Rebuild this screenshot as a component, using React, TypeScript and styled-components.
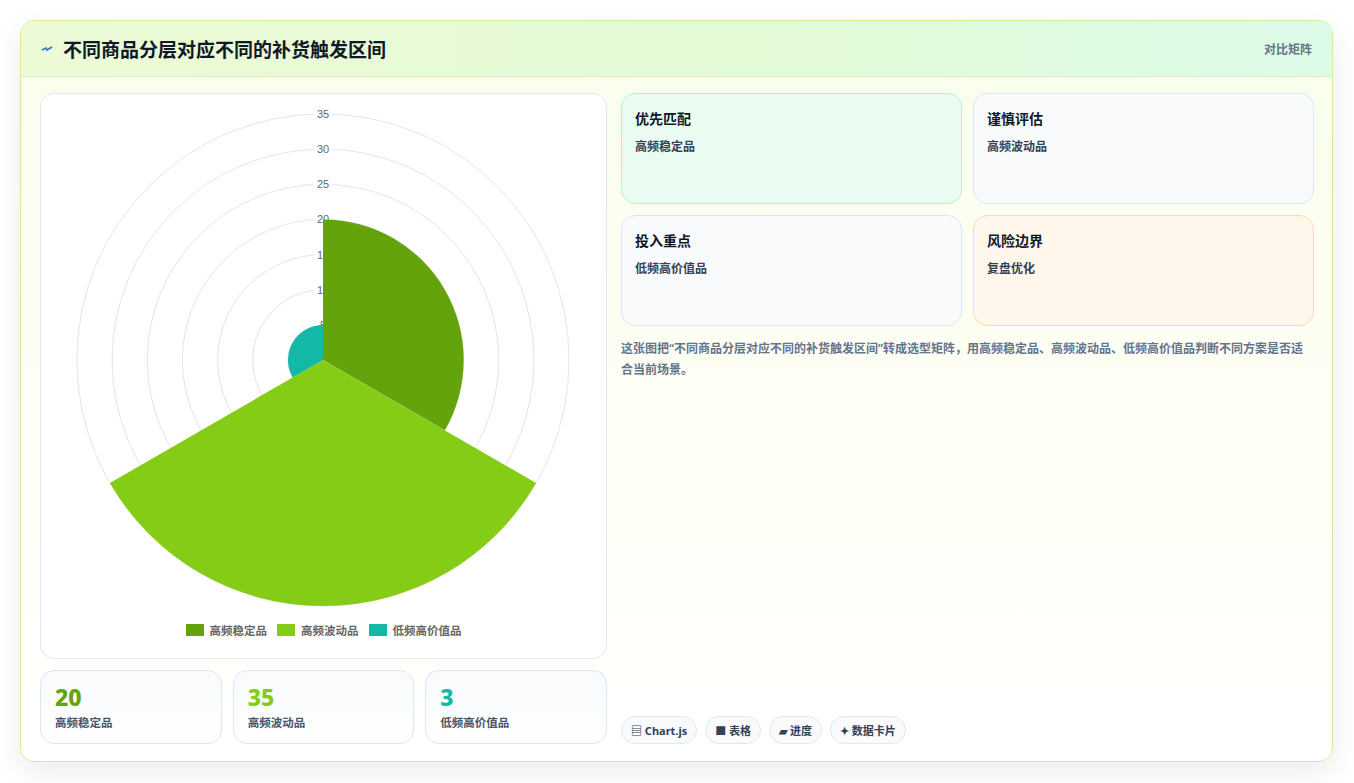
import React from "react"
import styled, { createGlobalStyle } from "styled-components"

const GlobalStyle = createGlobalStyle`
  body {
    margin: 0;
    background: #f3f4f6;
    font-family: "Noto Sans", "Noto Sans CJK SC", sans-serif;
  }
`

const Page = styled.div`
  width: 1354px;
  height: 783px;
  padding: 20px;
  box-sizing: border-box;
  background: #ffffff;
`

const Card = styled.div`
  height: 742px;
  width: 1313px;
  box-sizing: border-box;
  border: 1px solid #d4eb9c;
  border-radius: 14px;
  overflow: hidden;
  background: linear-gradient(180deg, #f8fdeb 0%, #fffff6 60%, #ffffff 100%);
  box-shadow: 0 10px 30px rgba(0, 0, 0, 0.08);
  display: flex;
  flex-direction: column;
`

const Header = styled.div`
  height: 55px;
  flex-shrink: 0;
  display: flex;
  align-items: center;
  justify-content: space-between;
  padding: 0 20px;
  background: linear-gradient(90deg, #ecfbd5 0%, #e2fad7 60%, #dcfbe8 100%);
  border-bottom: 1px solid #dcecc4;
`

const Title = styled.h1`
  margin: 0;
  font-size: 19px;
  font-weight: 700;
  color: #111827;
  display: flex;
  align-items: center;
  gap: 10px;
`

const HeaderTag = styled.span`
  font-size: 12px;
  color: #64748b;
  font-weight: 600;
`

const Body = styled.div`
  flex: 1;
  display: grid;
  grid-template-columns: 567px 1fr;
  gap: 14px;
  padding: 16px 18px 18px 19px;
`

const LeftCol = styled.div`
  display: flex;
  flex-direction: column;
  gap: 11px;
`

const ChartCard = styled.div`
  height: 566px;
  box-sizing: border-box;
  background: #fff;
  border: 1px solid #e2e8f0;
  border-radius: 14px;
  display: flex;
  flex-direction: column;
  align-items: center;
`

const Legend = styled.div`
  display: flex;
  gap: 10px;
  margin-top: 8px;
  font-size: 11.5px;
  font-weight: 600;
  color: #666;
`

const LegendItem = styled.span`
  display: flex;
  align-items: center;
  gap: 6px;
`

const Swatch = styled.i<{ $c: string }>`
  width: 18px;
  height: 12px;
  background: ${(p) => p.$c};
`

const Stats = styled.div`
  display: grid;
  grid-template-columns: repeat(3, 1fr);
  gap: 11px;
`

const Stat = styled.div`
  height: 74px;
  box-sizing: border-box;
  border: 1px solid #dbe7f3;
  border-radius: 14px;
  background: linear-gradient(180deg, #f8fafc, #ffffff);
  padding: 12px 14px;
`

const StatNum = styled.div<{ $c: string }>`
  font-size: 23px;
  font-weight: 800;
  line-height: 28px;
  color: ${(p) => p.$c};
`

const StatLabel = styled.div`
  font-size: 11.5px;
  font-weight: 600;
  color: #475569;
  margin-top: 3px;
`

const RightCol = styled.div`
  display: flex;
  flex-direction: column;
`

const Grid = styled.div`
  display: grid;
  grid-template-columns: 1fr 1fr;
  gap: 11px;
`

const Tile = styled.div<{ $bg: string; $bd: string }>`
  height: 111px;
  box-sizing: border-box;
  border-radius: 14px;
  border: 1px solid ${(p) => p.$bd};
  background: ${(p) => p.$bg};
  padding: 14px 13px;
`

const TileTitle = styled.div`
  font-size: 14px;
  font-weight: 700;
  color: #111827;
`

const TileText = styled.div`
  font-size: 12px;
  font-weight: 600;
  color: #374151;
  margin-top: 9px;
`

const Desc = styled.p`
  margin: 12px 0 0;
  font-size: 12px;
  font-weight: 600;
  line-height: 21px;
  color: #64748b;
`

const Tags = styled.div`
  margin-top: auto;
  display: flex;
  gap: 8px;
`

const TagPill = styled.span`
  height: 28px;
  box-sizing: border-box;
  padding: 0 9px;
  display: flex;
  align-items: center;
  gap: 4px;
  border: 1px solid #e2e8f0;
  border-radius: 14px;
  background: #f8fafc;
  font-size: 11px;
  font-weight: 700;
  color: #334155;
`

const cx = 282
const cy = 266
const unit = 7.03

function pt(r: number, deg: number) {
  const a = (deg * Math.PI) / 180
  return `${(cx + r * Math.cos(a)).toFixed(1)} ${(cy + r * Math.sin(a)).toFixed(1)}`
}

function sector(r: number, a0: number, a1: number) {
  return `M ${cx} ${cy} L ${pt(r, a0)} A ${r} ${r} 0 0 1 ${pt(r, a1)} Z`
}

const PolarChart = () => {
  const rings = [5, 10, 15, 20, 25, 30, 35]
  return (
    <svg width="566" height="520" viewBox="0 0 566 520">
      {rings.map((v) => (
        <circle key={v} cx={cx} cy={cy} r={v * unit} fill="none" stroke="#e5e5e5" strokeWidth="1" />
      ))}
      {rings.map((v) => (
        <g key={"l" + v}>
          <rect x={cx - 9} y={cy - v * unit - 7} width="18" height="13" fill="#fff" />
          <text
            x={cx}
            y={cy - v * unit + 4}
            textAnchor="middle"
            fontSize="11"
            fill="#666"
            fontFamily="Liberation Sans, sans-serif"
          >
            {v}
          </text>
        </g>
      ))}
      <path d={sector(20 * unit, -90, 30)} fill="#65a30d" />
      <path d={sector(35 * unit, 30, 150)} fill="#84cc16" />
      <path d={sector(35, 150, 270)} fill="#14b8a6" />
    </svg>
  )
}

const stats = [
  { n: "20", l: "高频稳定品", c: "#65a30d" },
  { n: "35", l: "高频波动品", c: "#84cc16" },
  { n: "3", l: "低频高价值品", c: "#14b8a6" },
]

const tiles = [
  { t: "优先匹配", s: "高频稳定品", bg: "#eafcf2", bd: "#bbf0cf" },
  { t: "谨慎评估", s: "高频波动品", bg: "#f8fafc", bd: "#dbe7f3" },
  { t: "投入重点", s: "低频高价值品", bg: "#f8fafc", bd: "#dbe7f3" },
  { t: "风险边界", s: "复盘优化", bg: "#fff7eb", bd: "#fbdcb0" },
]

export default function App() {
  return (
    <Page>
      <GlobalStyle />
      <Card>
        <Header>
          <Title>
            <svg width="12" height="10" viewBox="0 0 12 10">
              <path d="M1 6 L5 4 L6 6 L11 3" stroke="#3b6fd8" strokeWidth="1.6" fill="none" />
            </svg>
            不同商品分层对应不同的补货触发区间
          </Title>
          <HeaderTag>对比矩阵</HeaderTag>
        </Header>
        <Body>
          <LeftCol>
            <ChartCard>
              <PolarChart />
              <Legend>
                <LegendItem><Swatch $c="#65a30d" />高频稳定品</LegendItem>
                <LegendItem><Swatch $c="#84cc16" />高频波动品</LegendItem>
                <LegendItem><Swatch $c="#14b8a6" />低频高价值品</LegendItem>
              </Legend>
            </ChartCard>
            <Stats>
              {stats.map((s) => (
                <Stat key={s.l}>
                  <StatNum $c={s.c}>{s.n}</StatNum>
                  <StatLabel>{s.l}</StatLabel>
                </Stat>
              ))}
            </Stats>
          </LeftCol>
          <RightCol>
            <Grid>
              {tiles.map((t) => (
                <Tile key={t.t} $bg={t.bg} $bd={t.bd}>
                  <TileTitle>{t.t}</TileTitle>
                  <TileText>{t.s}</TileText>
                </Tile>
              ))}
            </Grid>
            <Desc>
              这张图把“不同商品分层对应不同的补货触发区间”转成选型矩阵，用高频稳定品、高频波动品、低频高价值品判断不同方案是否适合当前场景。
            </Desc>
            <Tags>
              <TagPill>▤ Chart.js</TagPill>
              <TagPill>■ 表格</TagPill>
              <TagPill>▰ 进度</TagPill>
              <TagPill>✦ 数据卡片</TagPill>
            </Tags>
          </RightCol>
        </Body>
      </Card>
    </Page>
  )
}
